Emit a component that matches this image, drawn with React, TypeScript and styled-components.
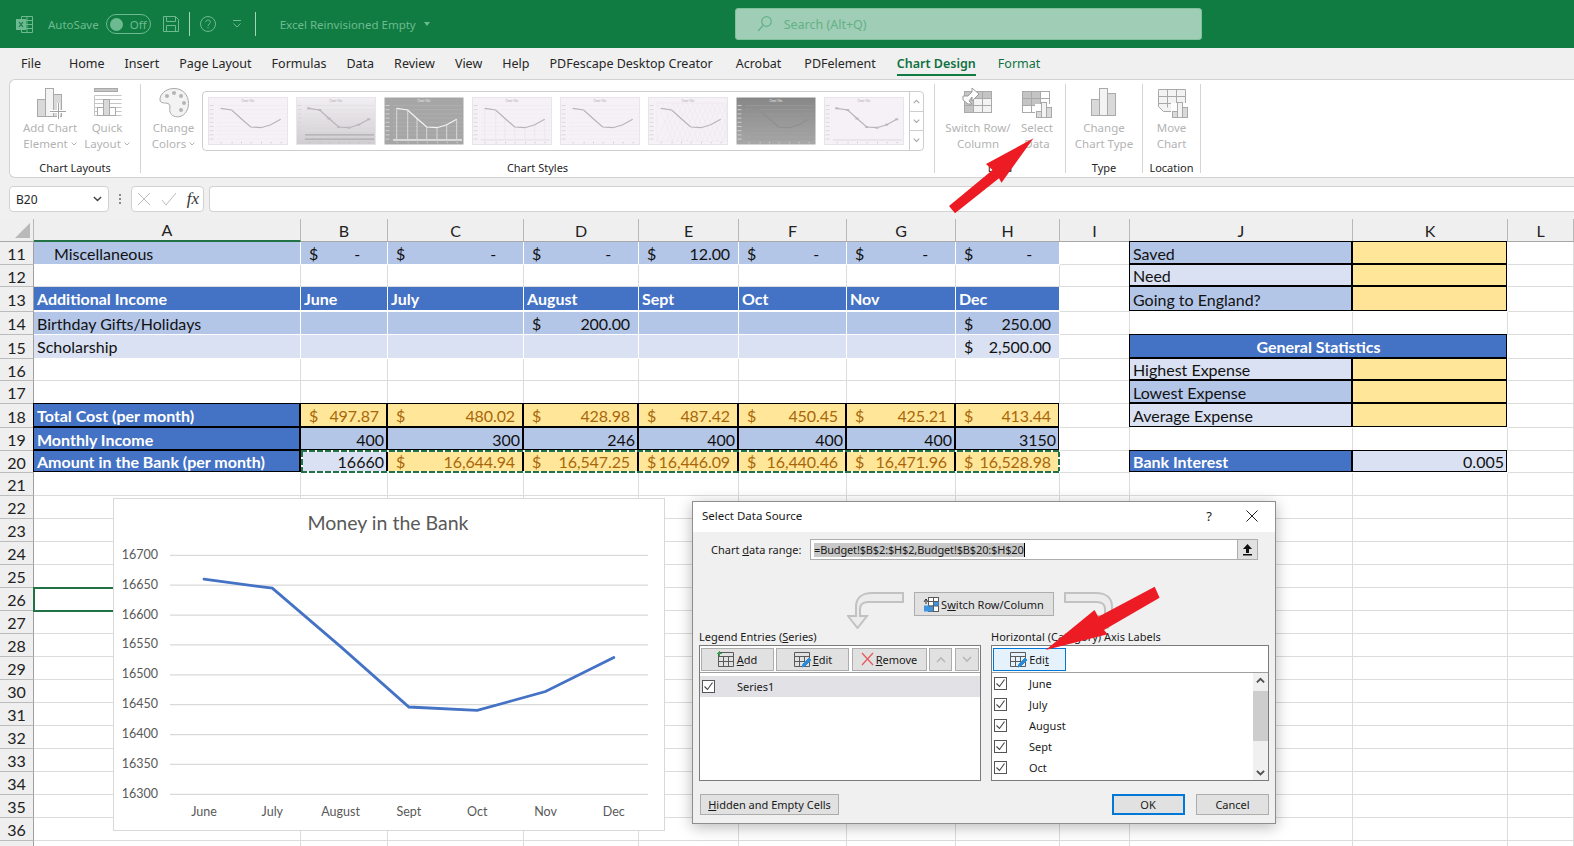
import React from 'react'
import styled, { createGlobalStyle, css } from 'styled-components'

const GlobalStyle = createGlobalStyle`
  html, body { margin: 0; padding: 0; background: #f0f0f0; }
  * { box-sizing: border-box; }
`

const UI_FONT = `'Noto Sans', 'Open Sans', sans-serif`
const CELL_FONT = `Lato, 'Liberation Sans', sans-serif`

const Page = styled.div`
  position: relative;
  width: 1574px;
  height: 846px;
  overflow: hidden;
  background: #f0f0f0;
  font-family: ${UI_FONT};
`

/* ---------- title bar ---------- */

const TitleBar = styled.div`
  display: flex;
  align-items: center;
  height: 48px;
  padding-left: 16px;
  background: #107c41;
  color: #6dba92;
  font-size: 11.5px;
`
const AutoSaveLabel = styled.span`
  margin-left: 15px;
`
const Toggle = styled.div`
  display: flex;
  align-items: center;
  gap: 7px;
  width: 45px;
  height: 20px;
  margin-left: 7px;
  padding-left: 3px;
  border: 1px solid #6dba92;
  border-radius: 10px;
  font-size: 11.5px;
`
const ToggleKnob = styled.span`
  width: 13px;
  height: 13px;
  border-radius: 50%;
  background: #6dba92;
`
const QuickIcon = styled.span<{ $gap: number }>`
  display: flex;
  margin-left: ${props => props.$gap}px;
`
const TitleDivider = styled.span<{ $gap: number }>`
  width: 1px;
  height: 24px;
  margin-left: ${props => props.$gap}px;
  background: #a6d3ba;
`
const FileName = styled.span`
  display: flex;
  align-items: center;
  gap: 8px;
  flex: none;
  width: 150px;
  margin-left: 24px;
  white-space: nowrap;
  svg {
    flex: none;
  }
`
const SearchBox = styled.div`
  display: flex;
  align-items: center;
  gap: 12px;
  width: 467px;
  height: 32px;
  margin-left: 305px;
  padding-left: 21px;
  border: 1px solid #7fc19d;
  border-radius: 3px;
  background: #a0cdb5;
  color: #62b287;
  font-size: 12.5px;
`

/* ---------- tabs ---------- */

const TabBar = styled.div`
  display: flex;
  height: 31px;
  padding-left: 11px;
  font-size: 12.5px;
  color: #262626;
`
const Tab = styled.div<{ $active?: boolean; $accent?: boolean; $after?: number }>`
  position: relative;
  display: flex;
  align-items: center;
  padding: 0 10px;
  margin-right: ${props => props.$after ?? 0}px;
  white-space: nowrap;
  color: ${props => (props.$accent ? '#0f7141' : '#262626')};
  ${props =>
    props.$active &&
    css`
      font-weight: 600;
      &::after {
        content: '';
        position: absolute;
        left: 10px;
        right: 10px;
        bottom: 3px;
        height: 2px;
        background: #107c41;
      }
    `}
`

/* ---------- ribbon ---------- */

const Ribbon = styled.div`
  display: flex;
  height: 99px;
  margin-left: 9px;
  padding: 4px 0 5px;
  border: 1px solid #d2d2d2;
  border-right: 0;
  border-radius: 6px 0 0 6px;
  background: #fff;
`
const RibbonGroup = styled.div<{ $width: number }>`
  display: flex;
  flex-direction: column;
  width: ${props => props.$width}px;
  height: 89px;
  border-right: 1px solid #d4d4d4;
`
const GroupBody = styled.div<{ $inset?: number }>`
  display: flex;
  flex: 1;
  padding-left: ${props => props.$inset ?? 0}px;
`
const GroupLabel = styled.div`
  margin-bottom: -3px;
  line-height: 16px;
  font-size: 11px;
  text-align: center;
  color: #262626;
`
const RibbonButton = styled.div<{ $width: number }>`
  display: flex;
  flex-direction: column;
  align-items: center;
  width: ${props => props.$width}px;
  padding-top: 3px;
  font-size: 11.5px;
  line-height: 16px;
  color: #b3b3b3;
  white-space: nowrap;
  > svg {
    margin-bottom: 1px;
  }
`
const LabelLine = styled.span`
  display: flex;
  align-items: center;
  gap: 3px;
`
const Gallery = styled.div`
  display: flex;
  width: 722px;
  height: 60px;
  margin: 7px 0 0 3px;
  padding: 5px 0 5px 5px;
  border: 1px solid #cdcdcd;
  border-radius: 4px;
`
const ThumbRow = styled.div`
  display: flex;
  flex: 1;
  gap: 8px;
`
const ScrollStack = styled.div`
  display: flex;
  flex-direction: column;
  width: 14px;
  margin: -5px 0;
  border-left: 1px solid #cdcdcd;
`
const ScrollStep = styled.div`
  display: flex;
  flex: 1;
  align-items: center;
  justify-content: center;
  & + & {
    border-top: 1px solid #cdcdcd;
  }
`

/* ---------- formula bar ---------- */

const FormulaBar = styled.div`
  display: flex;
  align-items: stretch;
  height: 26px;
  margin: 8px 0 7px 9px;
`
const NameBox = styled.div`
  display: flex;
  align-items: center;
  justify-content: space-between;
  width: 100px;
  padding: 0 6px;
  border: 1px solid #d2d2d2;
  border-radius: 4px;
  background: #fff;
  font-size: 12px;
  color: #262626;
`
const GripDots = styled.div`
  display: flex;
  flex-direction: column;
  align-items: center;
  justify-content: center;
  gap: 2px;
  width: 22px;
  span {
    width: 2px;
    height: 2px;
    background: #8a8a8a;
  }
`
const FormulaButtons = styled.div`
  display: flex;
  align-items: center;
  justify-content: space-between;
  width: 73px;
  padding: 0 4px 0 5px;
  border: 1px solid #d2d2d2;
  border-radius: 4px;
  background: #fff;
`
const FxMark = styled.span`
  font-family: 'Liberation Serif', serif;
  font-style: italic;
  font-size: 17px;
  color: #333;
`
const FormulaInput = styled.div`
  flex: 1;
  margin-left: 5px;
  border: 1px solid #d2d2d2;
  border-right: 0;
  border-radius: 4px 0 0 4px;
  background: #fff;
`

/* ---------- sheet ---------- */

const COLUMNS = ['A', 'B', 'C', 'D', 'E', 'F', 'G', 'H', 'I', 'J', 'K', 'L'] as const
type Col = (typeof COLUMNS)[number]
const COLUMN_WIDTHS = [34, 267, 87, 136, 115, 100, 108, 109, 104, 70, 223, 155, 66]

type Fill = 'mid' | 'light' | 'blue' | 'yellow' | 'amber'
const FILLS: Record<Fill, string> = {
  mid: '#b4c6e7',
  light: '#d9e1f2',
  blue: '#4472c4',
  yellow: '#ffe699',
  amber: '#ffe397',
}

type CellSpec = {
  text?: string
  money?: string
  dash?: boolean
  fill?: Fill
  strong?: boolean
  ruled?: boolean
  alignment?: 'right' | 'center'
  indent?: boolean
  span?: number
  gapBelow?: boolean
}
type RowSpec = { n: number; height: number; cells: Partial<Record<Col, CellSpec>> }

const SheetGrid = styled.div<{ $rows: string }>`
  position: relative;
  display: grid;
  grid-template-columns: ${COLUMN_WIDTHS.map(w => `${w}px`).join(' ')};
  grid-template-rows: ${props => props.$rows};
  height: 627px;
  overflow: hidden;
  background: #fff;
  font-family: ${CELL_FONT};
  font-size: 16px;
  color: #111;
`
const Corner = styled.div`
  grid-row: 1;
  grid-column: 1;
  position: relative;
  background: #efefef;
  border-right: 1px solid #b8b8b8;
  border-bottom: 1px solid #a8a8a8;
  &::after {
    content: '';
    position: absolute;
    right: 3px;
    bottom: 3px;
    width: 15px;
    height: 15px;
    background: #b9b9b9;
    clip-path: polygon(100% 0, 100% 100%, 0 100%);
  }
`
const ColumnHead = styled.div<{ $col: number; $current?: boolean }>`
  grid-row: 1;
  grid-column: ${props => props.$col};
  display: flex;
  align-items: center;
  justify-content: center;
  background: #efefef;
  border-right: 1px solid #b8b8b8;
  border-bottom: ${props => (props.$current ? '2px solid #217346' : '1px solid #a8a8a8')};
  color: #222;
`
const RowHead = styled.div<{ $row: number }>`
  grid-row: ${props => props.$row};
  grid-column: 1;
  display: flex;
  align-items: center;
  justify-content: center;
  padding-top: 1px;
  background: #efefef;
  border-right: 1px solid #a0a0a0;
  border-bottom: 1px solid #bcbcbc;
  color: #222;
`
const Cell = styled.div<{
  $row: number
  $col: number
  $span: number
  $fill?: Fill
  $strong?: boolean
  $ruled?: boolean
  $alignment?: 'right' | 'center'
  $indent?: boolean
  $gapBelow?: boolean
}>`
  grid-row: ${props => props.$row};
  grid-column: ${props => props.$col} / span ${props => props.$span};
  display: flex;
  align-items: center;
  justify-content: ${props =>
    props.$alignment === 'right' ? 'flex-end' : props.$alignment === 'center' ? 'center' : 'flex-start'};
  min-width: 0;
  padding: 0 3px 0 ${props => (props.$indent ? '20px' : '3px')};
  white-space: nowrap;
  background: ${props => (props.$fill ? FILLS[props.$fill] : '#fff')};
  background-clip: padding-box;
  border-right: 1px solid ${props => (props.$fill ? '#fff' : '#dcdcdc')};
  border-bottom: ${props =>
    props.$gapBelow ? '2px solid #fff' : `1px solid ${props.$fill ? '#fff' : '#dcdcdc'}`};
  color: ${props =>
    props.$fill === 'blue'
      ? '#fff'
      : props.$fill === 'yellow' && !props.$strong
      ? '#a8660a'
      : '#111'};
  font-weight: ${props => (props.$strong ? 700 : 400)};
  ${props =>
    props.$ruled &&
    css`
      border-color: transparent;
      box-shadow: inset -1px -1px 0 #000, -1px -1px 0 #000;
    `}
`
const MoneyFigure = styled.span`
  display: flex;
  justify-content: space-between;
  width: 100%;
  padding: 0 5px;
  letter-spacing: -0.1px;
`
const DashFigure = styled(MoneyFigure)`
  padding-right: 24px;
`
const ANT = '#217346'
const MarchingAnts = styled.div<{ $row: number }>`
  grid-row: ${props => props.$row};
  grid-column: 3 / 10;
  z-index: 1;
  margin: -1px 0 0 0;
  background:
    repeating-linear-gradient(90deg, ${ANT} 0 6px, #fff 6px 8px) top / 100% 2px no-repeat,
    repeating-linear-gradient(90deg, ${ANT} 0 6px, #fff 6px 8px) bottom / 100% 2px no-repeat,
    repeating-linear-gradient(0deg, ${ANT} 0 6px, #fff 6px 8px) left / 2px 100% no-repeat,
    repeating-linear-gradient(0deg, ${ANT} 0 6px, #fff 6px 8px) right / 2px 100% no-repeat;
  pointer-events: none;
`
const ActiveCell = styled.div<{ $row: number }>`
  grid-row: ${props => props.$row};
  grid-column: 2;
  z-index: 1;
  margin: -1px 0 -1px -1px;
  border: 2px solid #217346;
  pointer-events: none;
`

/* ---------- embedded chart ---------- */

const ChartFrame = styled.div`
  position: absolute;
  left: 113px;
  top: 279px;
  z-index: 2;
  width: 552px;
  height: 333px;
  border: 1px solid #d9d9d9;
  background: #fff;
`
const ChartSvg = styled.svg`
  display: block;
  font-family: ${CELL_FONT};
`

/* ---------- dialog ---------- */

const Dialog = styled.div`
  position: absolute;
  left: 692px;
  top: 282px;
  z-index: 3;
  display: flex;
  flex-direction: column;
  width: 584px;
  height: 323px;
  border: 1px solid #8e8e8e;
  background: #f0f0f0;
  box-shadow: 0 3px 14px rgba(0, 0, 0, 0.28);
  font-family: ${UI_FONT};
  font-size: 11px;
  color: #1a1a1a;
`
const DialogTitle = styled.div`
  display: flex;
  align-items: center;
  height: 30px;
  padding: 0 17px 3px 9px;
  background: #fff;
  font-size: 11.5px;
`
const DialogTitleText = styled.span`
  flex: 1;
`
const HelpMark = styled.span`
  margin-right: 34px;
  font-size: 13px;
`
const DialogBody = styled.div`
  display: flex;
  flex: 1;
  flex-direction: column;
  padding: 0 5px 0 6px;
`
const RangeRow = styled.div`
  display: flex;
  align-items: center;
  height: 21px;
  margin-top: 7px;
`
const RangeLabel = styled.span`
  width: 111px;
  padding-left: 12px;
`
const RangeInput = styled.div`
  display: flex;
  align-items: center;
  width: 448px;
  height: 21px;
  padding-left: 3px;
  border: 1px solid #adadad;
  background: #fff;
`
const RangeSelection = styled.span`
  flex: none;
  background: #c8c8c8;
  border-right: 1px solid #000;
  line-height: 14px;
  letter-spacing: -0.15px;
  white-space: nowrap;
`
const RangePicker = styled.span`
  display: flex;
  align-items: center;
  justify-content: center;
  width: 20px;
  height: 19px;
  margin-left: auto;
  background: #e1e1e1;
  border-left: 1px solid #adadad;
`
const SwitchArea = styled.div`
  display: flex;
  align-items: flex-start;
  justify-content: center;
  gap: 10px;
  height: 37px;
  margin-top: 32px;
  padding-right: 5px;
`
const DialogButton = styled.div<{ $width?: number; $primary?: boolean; $height?: number }>`
  display: flex;
  align-items: center;
  justify-content: center;
  gap: 2px;
  width: ${props => (props.$width ? `${props.$width}px` : 'auto')};
  height: ${props => props.$height ?? 21}px;
  border: ${props => (props.$primary ? '2px solid #0078d7' : '1px solid #adadad')};
  background: #e1e1e1;
  white-space: nowrap;
`
const ListsRow = styled.div`
  display: flex;
  gap: 10px;
`
const ListColumn = styled.div<{ $width: number }>`
  width: ${props => props.$width}px;
`
const ListTitle = styled.div`
  height: 16px;
  line-height: 15px;
  white-space: nowrap;
`
const ListPanel = styled.div`
  height: 136px;
  border: 1px solid #7a7a7a;
  background: #fff;
  overflow: hidden;
`
const ListToolbar = styled.div`
  display: flex;
  gap: 2.5px;
  height: 27px;
  padding: 1.5px 1px 0 0.5px;
  border-bottom: 1px solid #a0a0a0;
`
const FocusButton = styled(DialogButton)`
  border-color: #0078d7;
  background: #e5f1fb;
`
const ListBody = styled.div`
  display: flex;
  height: 107px;
`
const ListItems = styled.div<{ $top: number }>`
  flex: 1;
  padding-top: ${props => props.$top}px;
`
const ListItem = styled.div<{ $selected?: boolean; $rowHeight: number; $textInset: number }>`
  display: flex;
  align-items: center;
  height: ${props => props.$rowHeight}px;
  padding-left: 2px;
  background: ${props => (props.$selected ? '#e1e1e6' : 'transparent')};
  > span:last-child {
    margin-left: ${props => props.$textInset}px;
  }
`
const CheckBox = styled.span`
  display: flex;
  align-items: center;
  justify-content: center;
  width: 13px;
  height: 13px;
  border: 1px solid #555;
  background: #fff;
`
const ScrollRail = styled.div`
  display: flex;
  flex-direction: column;
  align-items: center;
  justify-content: space-between;
  width: 15px;
  padding: 4px 0;
  background: #f0f0f0;
`
const ScrollThumb = styled.div`
  width: 100%;
  height: 50px;
  margin: -6px 0 16px;
  background: #cdcdcd;
`
const DialogFooter = styled.div`
  display: flex;
  gap: 11.5px;
  margin-top: 13px;
  padding: 0 1px;
`
const FooterSpacer = styled.div`
  flex: 1;
`

const ArrowLayer = styled.svg`
  position: absolute;
  left: 0;
  top: 0;
  z-index: 5;
  pointer-events: none;
`

/* ---------- icons ---------- */

const FADED = '#6dba92'
const STROKE = '#a9a9a9'
const SHADE = '#d9d9d9'
const DARK_SHADE = '#c4c4c4'
const PALE = '#f3f3f3'

const ExcelMark = () => (
  <svg width="17" height="17" viewBox="0 0 17 17" fill="none" stroke={FADED}>
    <path d="M5.5 .5h11v16h-11zM5.5 4.5h11M5.5 8.5h11M5.5 12.5h11M11 .5v16" />
    <rect x="0.5" y="3.5" width="9" height="10" fill={FADED} />
    <path d="M3 6l4 5M7 6l-4 5" stroke="#107c41" strokeWidth="1.2" />
  </svg>
)
const SaveMark = () => (
  <svg width="16" height="16" viewBox="0 0 16 16" fill="none" stroke={FADED}>
    <path d="M.5.5h12l3 3v12H.5z" />
    <path d="M3.5.5v5h9v-5M3.5 15.5v-6h9v6" />
  </svg>
)
const HelpMarkIcon = () => (
  <svg width="16" height="16" viewBox="0 0 16 16" fill="none" stroke={FADED}>
    <circle cx="8" cy="8" r="7.5" />
    <path d="M5.7 6.2C5.8 4.7 7 4 8 4c1.4 0 2.4.9 2.4 2.1 0 1.9-2.4 1.9-2.4 3.9" />
    <path d="M8 11.2v1.2" />
  </svg>
)
const QatMark = () => (
  <svg width="8" height="8" viewBox="0 0 8 8" fill="none" stroke={FADED}>
    <path d="M0 .5h8M.5 3.5L4 7l3.5-3.5" />
  </svg>
)
const TriangleDown = ({ color }: { color: string }) => (
  <svg width="6" height="4" viewBox="0 0 6 4">
    <path d="M0 0h6L3 4z" fill={color} />
  </svg>
)
const SearchMark = () => (
  <svg width="15" height="16" viewBox="0 0 15 16" fill="none" stroke="#62b287" strokeWidth="1.2">
    <circle cx="9.5" cy="5.5" r="4.8" />
    <path d="M6 9.5L1 15" />
  </svg>
)
const Chevron = ({
  color = '#b0b0b0',
  size = 6,
  up = false,
  weight = 1,
}: {
  color?: string
  size?: number
  up?: boolean
  weight?: number
}) => (
  <svg width={size} height={size * 0.7} viewBox="0 0 10 7" fill="none" stroke={color} strokeWidth={weight * 1.6}>
    <path d={up ? 'M1 6l4-4 4 4' : 'M1 1l4 4 4-4'} />
  </svg>
)

const AddChartIcon = () => (
  <svg width="32" height="32" viewBox="0 0 32 32" stroke={STROKE}>
    <rect x="3.5" y="12.5" width="8" height="17" fill={SHADE} />
    <rect x="11.5" y="1.5" width="8" height="28" fill={PALE} />
    <rect x="19.5" y="7.5" width="8" height="22" fill={SHADE} />
    <path d="M24.5 16v16M16 24.5h16" stroke="#fff" strokeWidth="3" />
    <path d="M24.5 16v16M16 24.5h16" stroke="#a2a2a2" />
  </svg>
)
const QuickLayoutIcon = () => (
  <svg width="32" height="32" viewBox="0 0 32 32" stroke={STROKE} fill="none">
    <rect x="3.5" y="1.5" width="23" height="3" fill={DARK_SHADE} />
    <path d="M3.5 8.5h27M3.5 12.5h27M3.5 16.5h27M3.5 20.5h27M3.5 24.5h27M3.5 28.5h27M3.5 8.5v20" stroke="#c6c6c6" />
    <rect x="6.5" y="20.5" width="6" height="8" fill="#fff" />
    <rect x="12.5" y="12.5" width="6" height="16" fill={SHADE} />
    <rect x="18.5" y="20.5" width="6" height="8" fill="#fff" />
  </svg>
)
const PaletteIcon = () => (
  <svg width="32" height="32" viewBox="0 0 32 32" stroke={STROKE} fill={PALE}>
    <path d="M16 1.5C7 1.5 1.5 8 2 13c.4 4 5.5 2.5 8 3.5 3.5 1.5 1 5 2 8.5 1.2 4 6 5.5 10 4.5 5.5-1.5 8.5-7 8.5-13C30.5 8 25 1.5 16 1.5z" />
    <g fill="#b5b5b5" stroke="none">
      <circle cx="9" cy="9" r="2" />
      <circle cx="16" cy="6" r="2" />
      <circle cx="23" cy="9" r="2" />
      <circle cx="26" cy="16" r="2" />
      <circle cx="23" cy="23" r="2" />
    </g>
  </svg>
)
const SwitchRowIcon = () => (
  <svg width="32" height="32" viewBox="0 0 32 32" stroke={STROKE}>
    <rect x="2.5" y="4.5" width="27" height="21" fill={PALE} />
    <rect x="2.5" y="4.5" width="27" height="7" fill={DARK_SHADE} />
    <rect x="2.5" y="11.5" width="9" height="14" fill={DARK_SHADE} />
    <path d="M11.5 4.5v21M20.5 4.5v21M2.5 18.5h27" />
    <path d="M1 9h5l4-4V1l7 6-7 7v-4l-3 4 3 3H6L1 13z" fill="#fff" stroke="#9a9a9a" />
  </svg>
)
const SelectDataIcon = () => (
  <svg width="32" height="32" viewBox="0 0 32 32" stroke={STROKE}>
    <rect x="1.5" y="4.5" width="27" height="21" fill="#fff" />
    <rect x="1.5" y="4.5" width="18" height="14" fill={DARK_SHADE} />
    <path d="M10.5 4.5v21M19.5 4.5v21M1.5 11.5h27M1.5 18.5h27" />
    <rect x="14" y="17" width="18" height="15" fill="#fff" stroke="none" />
    <rect x="15.5" y="24.5" width="5" height="6" fill={SHADE} />
    <rect x="20.5" y="15.5" width="5" height="15" fill={PALE} />
    <rect x="25.5" y="20.5" width="5" height="10" fill={SHADE} />
  </svg>
)
const ChangeTypeIcon = () => (
  <svg width="32" height="32" viewBox="0 0 32 32" stroke={STROKE}>
    <rect x="3.5" y="12.5" width="8" height="16" fill={SHADE} />
    <rect x="11.5" y="1.5" width="8" height="27" fill={PALE} />
    <rect x="19.5" y="6.5" width="8" height="22" fill={SHADE} />
  </svg>
)
const MoveChartIcon = () => (
  <svg width="32" height="32" viewBox="0 0 32 32" stroke={STROKE}>
    <path d="M2.5 2.5h27v22h-22l-5-5z" fill={PALE} />
    <path d="M2.5 9.5h27M2.5 16.5h27M11.5 2.5v18M20.5 2.5v18" />
    <rect x="15" y="16" width="18" height="16" fill="#fff" stroke="none" />
    <rect x="16.5" y="24.5" width="5" height="6" fill={SHADE} />
    <rect x="21.5" y="15.5" width="5" height="15" fill={PALE} />
    <rect x="26.5" y="20.5" width="5" height="10" fill={SHADE} />
  </svg>
)

const THUMB_LINE = '12.7,11.3 23.7,13 33,21.5 42.7,30 53,30.7 62.7,27.7 72.7,22.3'
const THUMB_POINTS = THUMB_LINE.split(' ').map(p => p.split(',').map(Number))

type ThumbKind = 'plain' | 'gloss' | 'dark' | 'drop' | 'hatch' | 'shade' | 'marker'

const ChartThumb = ({ kind, id }: { kind: ThumbKind; id: string }) => {
  const dark = kind === 'dark' || kind === 'shade'
  const grid = kind === 'dark' ? '#b4b4b4' : kind === 'shade' ? '#9c9c9c' : kind === 'gloss' ? '#e0dde0' : '#efeaf1'
  const line = kind === 'dark' ? '#f4f4f4' : kind === 'shade' ? '#8f8f8f' : '#b8b3b9'
  const back =
    kind === 'dark' ? '#a6a6a6' : kind === 'shade' || kind === 'gloss' ? `url(#${id})` : '#f6f1f7'
  const gridYs = [8.5, 12.7, 16.9, 21.1, 25.3, 29.5, 33.7, 37.9, 42.1]
  return (
    <svg width="80" height="48" viewBox="0 0 80 48">
      <defs>
        <linearGradient id={id} x1="0" y1="0" x2="0" y2="1">
          <stop offset="0" stopColor={kind === 'shade' ? '#878787' : '#f2eff2'} />
          <stop offset="1" stopColor={kind === 'shade' ? '#a8a8a8' : '#cfcdcf'} />
        </linearGradient>
      </defs>
      <rect x="0.5" y="0.5" width="79" height="47" fill={back} stroke={dark ? 'none' : '#e9e3eb'} />
      <text x="40" y="5" fontSize="2.8" textAnchor="middle" fill={dark ? '#eee' : '#a8a4a8'} fontFamily="Lato, sans-serif">
        Chart Title
      </text>
      {kind !== 'hatch' &&
        kind !== 'marker' &&
        gridYs.map((y, i) => (
          <path
            key={y}
            d={`M9 ${y}H78`}
            stroke={kind === 'gloss' && i > 6 ? '#a3a1a3' : grid}
            strokeWidth={kind === 'gloss' && i > 6 ? 1 : 0.6}
          />
        ))}
      {gridYs.map(y => (
        <path key={`t${y}`} d={`M1.5 ${y}h4`} stroke={dark ? '#ddd' : '#d4d0d4'} strokeWidth="0.8" />
      ))}
      {kind === 'hatch' && (
        <g stroke="#e8e2ea" strokeWidth="0.4">
          <rect x="9" y="6" width="69" height="38" fill="none" />
          {Array.from({ length: 14 }, (_, i) => (
            <path key={i} d={`M${9 + i * 5} 6l16 38M${9 + i * 5} 44l16-38`} />
          ))}
        </g>
      )}
      {(kind === 'dark' || kind === 'drop') &&
        THUMB_POINTS.map(([x, y]) => (
          <path
            key={x}
            d={`M${x} ${y}V43`}
            stroke={kind === 'dark' ? '#dedede' : '#e9e3eb'}
            strokeWidth={kind === 'dark' ? 0.9 : 0.7}
          />
        ))}
      {(kind === 'dark' || kind === 'drop') && (
        <rect x="9" y="42" width="69" height="2" fill={kind === 'dark' ? '#d8d8d8' : '#ece6ee'} />
      )}
      {kind === 'marker' && <path d="M9 43H78" stroke="#d8d2da" strokeWidth="0.8" />}
      <polyline points={THUMB_LINE} fill="none" stroke={line} strokeWidth="1.2" />
      {(kind === 'gloss' || kind === 'marker') &&
        THUMB_POINTS.map(([x, y]) => <rect key={x} x={x - 1.5} y={y - 1} width="3" height="2" fill="#bdb8be" />)}
      {THUMB_POINTS.map(([x]) => (
        <rect key={`x${x}`} x={x} y="45" width="0.8" height="1.2" fill={dark ? '#ddd' : '#bdb9be'} />
      ))}
    </svg>
  )
}

const TableIcon = ({ accent }: { accent?: 'add' | 'edit' }) => (
  <svg width="18" height="17" viewBox="0 0 18 17" fill="none" stroke="#5a5a5a">
    <path d="M1.5 1.5h15v14h-15zM1.5 5.5h15M1.5 10.5h15M6.5 5.5v10M11.5 5.5v10" />
    {accent === 'add' && <path d="M2.5 0v5M0 2.5h5" stroke="#2aa84a" />}
    {accent === 'edit' && <path d="M9 16l1-3 6-6 2 2-6 6z" fill="#2b8ad8" stroke="#2b8ad8" />}
  </svg>
)
const CrossIcon = () => (
  <svg width="13" height="14" viewBox="0 0 13 14" fill="none" stroke="#e8565a" strokeWidth="1.2">
    <path d="M1 1l11 12M12 1L1 13" />
  </svg>
)
const SwapIcon = () => (
  <svg width="16" height="16" viewBox="0 0 16 16" fill="none">
    <rect x="5.5" y="1.5" width="10" height="14" fill="#fff" stroke="#5a5a5a" />
    <rect x="1" y="9.5" width="9" height="6" fill="#3d95df" />
    <rect x="10.5" y="6" width="5" height="4" fill="#3d95df" />
    <path d="M5.5 5.5h10M10.5 1.5v14M5.5 10h10" stroke="#5a5a5a" />
    <path d="M1 6l2-3 2 3M3 3v5" stroke="#333" />
  </svg>
)
const BentArrowLeft = () => (
  <svg width="57" height="37" viewBox="0 0 57 37" fill="#ececec" stroke="#c2c2c2" strokeWidth="2">
    <path d="M56 1H25C15 1 9 6 9 15v9H1l9.5 12L20 24h-7v-7c0-5 4-7 8-7h35z" />
  </svg>
)
const BentArrowRight = () => (
  <svg width="54" height="37" viewBox="0 0 54 37" fill="#ececec" stroke="#c2c2c2" strokeWidth="2">
    <path d="M1 1h31c10 0 16 5 16 14v9h5l-9.5 12L34 24h7v-7c0-5-4-7-8-7H1z" />
  </svg>
)
const Tick = () => (
  <svg width="11" height="11" viewBox="0 0 11 11" fill="none" stroke="#444" strokeWidth="1.1">
    <path d="M1.5 5.5l3 3 5-7" />
  </svg>
)
const UploadArrow = () => (
  <svg width="11" height="13" viewBox="0 0 11 13" fill="#111">
    <path d="M5.5 1L10 6H7v4H4V6H1zM1 11h9v1.5H1z" />
  </svg>
)

/* ---------- data ---------- */

const yellowMoney = (money: string): CellSpec => ({ money, fill: 'yellow', ruled: true })
const midDash = (): CellSpec => ({ dash: true, fill: 'mid' })
const ruledLabel = (text: string, fill: Fill): CellSpec => ({ text, fill, ruled: true })
const incomeHead = (text: string): CellSpec => ({ text, fill: 'blue', strong: true, gapBelow: true })
const blankFill = (fill: Fill): CellSpec => ({ fill })
const plainRow = (n: number, height = 23): RowSpec => ({ n, height, cells: {} })
const incomeFigure = (value: string): CellSpec => ({
  text: value,
  fill: 'mid',
  ruled: true,
  alignment: 'right',
})
const darkLabel = (text: string): CellSpec => ({ text, fill: 'blue', strong: true, ruled: true })

const LAST_NUMBERED_ROW = 36

const ROWS: RowSpec[] = [
  {
    n: 11,
    height: 23,
    cells: {
      A: { text: 'Miscellaneous', fill: 'mid', indent: true },
      B: midDash(),
      C: midDash(),
      D: midDash(),
      E: { money: '12.00', fill: 'mid' },
      F: midDash(),
      G: midDash(),
      H: midDash(),
      J: ruledLabel('Saved', 'mid'),
      K: { fill: 'yellow', ruled: true },
    },
  },
  {
    n: 12,
    height: 22,
    cells: { J: ruledLabel('Need', 'light'), K: { fill: 'yellow', ruled: true } },
  },
  {
    n: 13,
    height: 25,
    cells: {
      A: incomeHead('Additional Income'),
      B: incomeHead('June'),
      C: incomeHead('July'),
      D: incomeHead('August'),
      E: incomeHead('Sept'),
      F: incomeHead('Oct'),
      G: incomeHead('Nov'),
      H: incomeHead('Dec'),
      J: ruledLabel('Going to England?', 'mid'),
      K: { fill: 'amber', ruled: true },
    },
  },
  {
    n: 14,
    height: 23,
    cells: {
      A: { text: 'Birthday Gifts/Holidays', fill: 'mid' },
      B: blankFill('mid'),
      C: blankFill('mid'),
      D: { money: '200.00', fill: 'mid' },
      E: blankFill('mid'),
      F: blankFill('mid'),
      G: blankFill('mid'),
      H: { money: '250.00', fill: 'mid' },
    },
  },
  {
    n: 15,
    height: 24,
    cells: {
      A: { text: 'Scholarship', fill: 'light' },
      B: blankFill('light'),
      C: blankFill('light'),
      D: blankFill('light'),
      E: blankFill('light'),
      F: blankFill('light'),
      G: blankFill('light'),
      H: { money: '2,500.00', fill: 'light' },
      J: { text: 'General Statistics', fill: 'blue', strong: true, ruled: true, alignment: 'center', span: 2 },
    },
  },
  {
    n: 16,
    height: 22,
    cells: { J: ruledLabel('Highest Expense', 'light'), K: { fill: 'yellow', ruled: true } },
  },
  {
    n: 17,
    height: 23,
    cells: { J: ruledLabel('Lowest Expense', 'mid'), K: { fill: 'yellow', ruled: true } },
  },
  {
    n: 18,
    height: 24,
    cells: {
      A: darkLabel('Total Cost (per month)'),
      B: yellowMoney('497.87'),
      C: yellowMoney('480.02'),
      D: yellowMoney('428.98'),
      E: yellowMoney('487.42'),
      F: yellowMoney('450.45'),
      G: yellowMoney('425.21'),
      H: yellowMoney('413.44'),
      J: ruledLabel('Average Expense', 'light'),
      K: { fill: 'yellow', ruled: true },
    },
  },
  {
    n: 19,
    height: 23,
    cells: {
      A: darkLabel('Monthly Income'),
      B: incomeFigure('400'),
      C: incomeFigure('300'),
      D: incomeFigure('246'),
      E: incomeFigure('400'),
      F: incomeFigure('400'),
      G: incomeFigure('400'),
      H: incomeFigure('3150'),
    },
  },
  {
    n: 20,
    height: 22,
    cells: {
      A: darkLabel('Amount in the Bank (per month)'),
      B: { text: '16660', fill: 'light', ruled: true, alignment: 'right' },
      C: yellowMoney('16,644.94'),
      D: yellowMoney('16,547.25'),
      E: yellowMoney('16,446.09'),
      F: yellowMoney('16,440.46'),
      G: yellowMoney('16,471.96'),
      H: yellowMoney('16,528.98'),
      J: darkLabel('Bank Interest'),
      K: { text: '0.005', fill: 'light', ruled: true, alignment: 'right' },
    },
  },
  ...Array.from({ length: 17 }, (_, i) => plainRow(21 + i)),
]

const ROW_TEMPLATE = ['23px', ...ROWS.map(r => `${r.height}px`)].join(' ')
const gridRowOf = (n: number) => ROWS.findIndex(r => r.n === n) + 2

const TABS: { label: string; after?: number }[] = [
  { label: 'File', after: 8 },
  { label: 'Home' },
  { label: 'Insert' },
  { label: 'Page Layout' },
  { label: 'Formulas' },
  { label: 'Data' },
  { label: 'Review' },
  { label: 'View' },
  { label: 'Help' },
  { label: 'PDFescape Desktop Creator', after: 3 },
  { label: 'Acrobat', after: 3 },
  { label: 'PDFelement', after: 1 },
]

const THUMBS: ThumbKind[] = ['plain', 'gloss', 'dark', 'drop', 'plain', 'hatch', 'shade', 'marker']

const MONTHS = ['June', 'July', 'August', 'Sept', 'Oct', 'Nov', 'Dec']
const BANK = [16660, 16644.94, 16547.25, 16446.09, 16440.46, 16471.96, 16528.98]
const AXIS = [16700, 16650, 16600, 16550, 16500, 16450, 16400, 16350, 16300]

// chart coordinates are relative to the chart frame
const axisY = (value: number) => 295.3 - ((value - 16300) / 400) * 239
const monthX = (i: number) => 90 + i * 68.3

const MoneyChart = () => (
  <ChartSvg width="550" height="331" viewBox="0 0 550 331">
    <text x="274" y="31" textAnchor="middle" fontSize="19.5" fill="#595959">
      Money in the Bank
    </text>
    {AXIS.map(value => (
      <g key={value}>
        <path d={`M56 ${axisY(value)}H534`} stroke="#d9d9d9" strokeWidth="1.2" />
        <text x="44" y={axisY(value) + 3.5} textAnchor="end" fontSize="12.5" fill="#595959">
          {value}
        </text>
      </g>
    ))}
    <polyline
      points={BANK.map((v, i) => `${monthX(i)},${axisY(v)}`).join(' ')}
      fill="none"
      stroke="#4472c4"
      strokeWidth="2.8"
      strokeLinecap="round"
    />
    {MONTHS.map((m, i) => (
      <text key={m} x={monthX(i)} y="317" textAnchor="middle" fontSize="12.5" fill="#595959">
        {m}
      </text>
    ))}
  </ChartSvg>
)

const renderCell = (col: Col, colIndex: number, row: RowSpec) => {
  const spec = row.cells[col]
  // K15 is swallowed by the merged heading in J15
  if (row.n === 15 && col === 'K') return null
  return (
    <Cell
      key={`${col}${row.n}`}
      $row={gridRowOf(row.n)}
      $col={colIndex + 2}
      $span={spec?.span ?? 1}
      $fill={spec?.fill}
      $strong={spec?.strong}
      $ruled={spec?.ruled}
      $alignment={spec?.alignment}
      $indent={spec?.indent}
      $gapBelow={spec?.gapBelow}
    >
      {spec?.text}
      {spec?.money && (
        <MoneyFigure>
          <span>$</span>
          <span>{spec.money}</span>
        </MoneyFigure>
      )}
      {spec?.dash && (
        <DashFigure>
          <span>$</span>
          <span>-</span>
        </DashFigure>
      )}
    </Cell>
  )
}

const RibbonCaret = () => <Chevron color="#b0b0b0" size={6} />

const SelectDataDialog = () => (
  <Dialog>
    <DialogTitle>
      <DialogTitleText>Select Data Source</DialogTitleText>
      <HelpMark>?</HelpMark>
      <svg width="12" height="12" viewBox="0 0 12 12" stroke="#222" fill="none">
        <path d="M.5.5l11 11M11.5.5l-11 11" />
      </svg>
    </DialogTitle>
    <DialogBody>
      <RangeRow>
        <RangeLabel>
          Chart <u>d</u>ata range:
        </RangeLabel>
        <RangeInput>
          <RangeSelection>=Budget!$B$2:$H$2,Budget!$B$20:$H$20</RangeSelection>
          <RangePicker>
            <UploadArrow />
          </RangePicker>
        </RangeInput>
      </RangeRow>
      <SwitchArea>
        <BentArrowLeft />
        <DialogButton $width={140} $height={24}>
          <SwapIcon />
          <span>
            S<u>w</u>itch Row/Column
          </span>
        </DialogButton>
        <BentArrowRight />
      </SwitchArea>
      <ListsRow>
        <ListColumn $width={282}>
          <ListTitle>
            Legend Entries (<u>S</u>eries)
          </ListTitle>
          <ListPanel>
            <ListToolbar>
              <DialogButton $width={73} $height={23.5}>
                <TableIcon accent="add" />
                <span>
                  <u>A</u>dd
                </span>
              </DialogButton>
              <DialogButton $width={73} $height={23.5}>
                <TableIcon accent="edit" />
                <span>
                  <u>E</u>dit
                </span>
              </DialogButton>
              <DialogButton $width={75} $height={23.5}>
                <CrossIcon />
                <span>
                  <u>R</u>emove
                </span>
              </DialogButton>
              <DialogButton $width={23} $height={23.5}>
                <Chevron up color="#b8b8b8" size={10} />
              </DialogButton>
              <DialogButton $width={24} $height={23.5}>
                <Chevron color="#b8b8b8" size={10} />
              </DialogButton>
            </ListToolbar>
            <ListBody>
              <ListItems $top={3}>
                <ListItem $selected $rowHeight={21} $textInset={22}>
                  <CheckBox>
                    <Tick />
                  </CheckBox>
                  <span>Series1</span>
                </ListItem>
              </ListItems>
            </ListBody>
          </ListPanel>
        </ListColumn>
        <ListColumn $width={278}>
          <ListTitle>Horizontal (Category) Axis Labels</ListTitle>
          <ListPanel>
            <ListToolbar>
              <FocusButton $width={73} $height={23.5}>
                <TableIcon accent="edit" />
                <span>
                  Edi<u>t</u>
                </span>
              </FocusButton>
            </ListToolbar>
            <ListBody>
              <ListItems $top={0}>
                {['June', 'July', 'August', 'Sept', 'Oct'].map(month => (
                  <ListItem key={month} $rowHeight={21} $textInset={22}>
                    <CheckBox>
                      <Tick />
                    </CheckBox>
                    <span>{month}</span>
                  </ListItem>
                ))}
              </ListItems>
              <ScrollRail>
                <Chevron up color="#505050" size={9} weight={1.3} />
                <ScrollThumb />
                <Chevron color="#505050" size={9} weight={1.3} />
              </ScrollRail>
            </ListBody>
          </ListPanel>
        </ListColumn>
      </ListsRow>
      <DialogFooter>
        <DialogButton $width={139}>
          <span>
            <u>H</u>idden and Empty Cells
          </span>
        </DialogButton>
        <FooterSpacer />
        <DialogButton $width={73} $primary>
          OK
        </DialogButton>
        <DialogButton $width={73}>Cancel</DialogButton>
      </DialogFooter>
    </DialogBody>
  </Dialog>
)

const App: React.FC = () => (
  <Page>
    <GlobalStyle />
    <TitleBar>
      <ExcelMark />
      <AutoSaveLabel>AutoSave</AutoSaveLabel>
      <Toggle>
        <ToggleKnob />
        Off
      </Toggle>
      <QuickIcon $gap={12}>
        <SaveMark />
      </QuickIcon>
      <TitleDivider $gap={10} />
      <QuickIcon $gap={10}>
        <HelpMarkIcon />
      </QuickIcon>
      <QuickIcon $gap={17}>
        <QatMark />
      </QuickIcon>
      <TitleDivider $gap={14} />
      <FileName>
        Excel Reinvisioned Empty
        <TriangleDown color={FADED} />
      </FileName>
      <SearchBox>
        <SearchMark />
        Search (Alt+Q)
      </SearchBox>
    </TitleBar>

    <TabBar>
      {TABS.map(tab => (
        <Tab key={tab.label} $after={tab.after}>
          {tab.label}
        </Tab>
      ))}
      <Tab $active $accent $after={2}>
        Chart Design
      </Tab>
      <Tab $accent>Format</Tab>
    </TabBar>

    <Ribbon>
      <RibbonGroup $width={131}>
        <GroupBody $inset={7}>
          <RibbonButton $width={66}>
            <AddChartIcon />
            <LabelLine>Add Chart</LabelLine>
            <LabelLine>
              Element <RibbonCaret />
            </LabelLine>
          </RibbonButton>
          <RibbonButton $width={48}>
            <QuickLayoutIcon />
            <LabelLine>Quick</LabelLine>
            <LabelLine>
              Layout <RibbonCaret />
            </LabelLine>
          </RibbonButton>
        </GroupBody>
        <GroupLabel>Chart Layouts</GroupLabel>
      </RibbonGroup>
      <RibbonGroup $width={794}>
        <GroupBody $inset={7}>
          <RibbonButton $width={51}>
            <PaletteIcon />
            <LabelLine>Change</LabelLine>
            <LabelLine>
              Colors <RibbonCaret />
            </LabelLine>
          </RibbonButton>
          <Gallery>
            <ThumbRow>
              {THUMBS.map((kind, i) => (
                <ChartThumb key={i} kind={kind} id={`thumb-${i}`} />
              ))}
            </ThumbRow>
            <ScrollStack>
              <ScrollStep>
                <Chevron up color="#a8a8a8" size={7} />
              </ScrollStep>
              <ScrollStep>
                <Chevron color="#a8a8a8" size={7} />
              </ScrollStep>
              <ScrollStep>
                <Chevron color="#a8a8a8" size={7} />
              </ScrollStep>
            </ScrollStack>
          </Gallery>
        </GroupBody>
        <GroupLabel>Chart Styles</GroupLabel>
      </RibbonGroup>
      <RibbonGroup $width={131}>
        <GroupBody $inset={4}>
          <RibbonButton $width={78}>
            <SwitchRowIcon />
            <LabelLine>Switch Row/</LabelLine>
            <LabelLine>Column</LabelLine>
          </RibbonButton>
          <RibbonButton $width={40}>
            <SelectDataIcon />
            <LabelLine>Select</LabelLine>
            <LabelLine>Data</LabelLine>
          </RibbonButton>
        </GroupBody>
        <GroupLabel>Data</GroupLabel>
      </RibbonGroup>
      <RibbonGroup $width={77}>
        <GroupBody>
          <RibbonButton $width={77}>
            <ChangeTypeIcon />
            <LabelLine>Change</LabelLine>
            <LabelLine>Chart Type</LabelLine>
          </RibbonButton>
        </GroupBody>
        <GroupLabel>Type</GroupLabel>
      </RibbonGroup>
      <RibbonGroup $width={58}>
        <GroupBody>
          <RibbonButton $width={58}>
            <MoveChartIcon />
            <LabelLine>Move</LabelLine>
            <LabelLine>Chart</LabelLine>
          </RibbonButton>
        </GroupBody>
        <GroupLabel>Location</GroupLabel>
      </RibbonGroup>
    </Ribbon>

    <FormulaBar>
      <NameBox>
        B20
        <Chevron color="#444" size={9} />
      </NameBox>
      <GripDots>
        <span />
        <span />
        <span />
      </GripDots>
      <FormulaButtons>
        <svg width="14" height="14" viewBox="0 0 14 14" stroke="#bdbdbd" fill="none">
          <path d="M1 1l12 12M13 1L1 13" />
        </svg>
        <svg width="16" height="14" viewBox="0 0 16 14" stroke="#bdbdbd" fill="none">
          <path d="M1 8l4 5L15 1" />
        </svg>
        <FxMark>fx</FxMark>
      </FormulaButtons>
      <FormulaInput />
    </FormulaBar>

    <SheetGrid $rows={ROW_TEMPLATE}>
      <Corner />
      {COLUMNS.map((col, i) => (
        <ColumnHead key={col} $col={i + 2} $current={col === 'A'}>
          {col}
        </ColumnHead>
      ))}
      {ROWS.map(row => (
        <React.Fragment key={row.n}>
          <RowHead $row={gridRowOf(row.n)}>{row.n <= LAST_NUMBERED_ROW ? row.n : null}</RowHead>
          {COLUMNS.map((col, i) => renderCell(col, i, row))}
        </React.Fragment>
      ))}
      <MarchingAnts $row={gridRowOf(20)} />
      <ActiveCell $row={gridRowOf(26)} />
      <ChartFrame>
        <MoneyChart />
      </ChartFrame>
      <SelectDataDialog />
    </SheetGrid>

    <ArrowLayer width="1574" height="846" viewBox="0 0 1574 846">
      <polygon points="1033.5,138.3 986,164 992.5,170 949,206 955,213.3 999,178.3 1001.5,182.7" fill="#ed1c24" />
      <polygon points="1045.6,650 1094.5,610 1098.3,616.7 1154.7,586.7 1159.6,597.7 1104,630 1107.7,634.3" fill="#ed1c24" />
    </ArrowLayer>
  </Page>
)

export default App
